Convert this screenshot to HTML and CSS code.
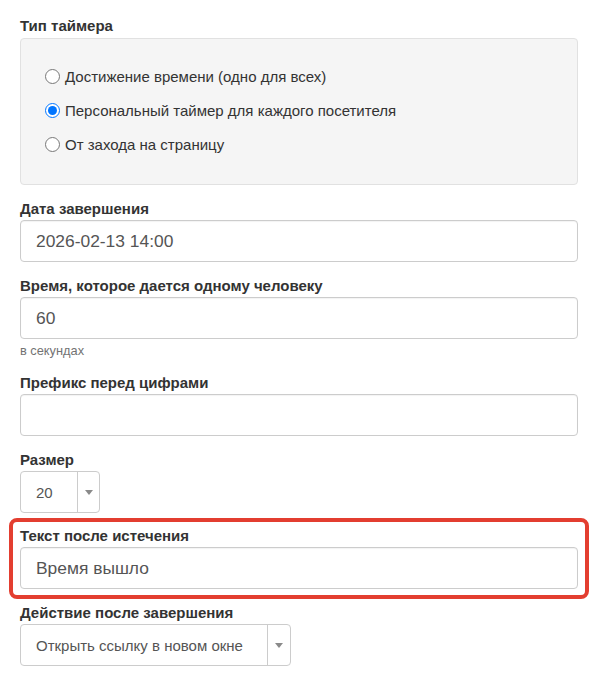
FILE: index.html
```html
<!DOCTYPE html>
<html lang="ru">
<head>
<meta charset="utf-8">
<title>Настройки таймера</title>
<link rel="stylesheet" href="styles.css">
</head>
<body>
<form class="form">
  <div class="group group--timer">
    <div class="label label--top">Тип таймера</div>
    <div class="panel">
      <label class="radio"><input type="radio" name="type"> <span>Достижение времени (одно для всех)</span></label>
      <label class="radio"><input type="radio" name="type" checked> <span>Персональный таймер для каждого посетителя</span></label>
      <label class="radio"><input type="radio" name="type"> <span>От захода на страницу</span></label>
    </div>
  </div>

  <div class="group">
    <label class="label">Дата завершения</label>
    <div class="input input--lg">2026-02-13 14:00</div>
  </div>

  <div class="group">
    <label class="label">Время, которое дается одному человеку</label>
    <div class="input input--lg">60</div>
    <div class="help">в секундах</div>
  </div>

  <div class="group">
    <label class="label">Префикс перед цифрами</label>
    <div class="input input--lg"></div>
  </div>

  <div class="group group--tight">
    <label class="label">Размер</label>
    <div class="select select--size">
      <span class="select__value">20</span>
      <span class="select__caret"><span class="triangle"></span></span>
    </div>
  </div>

  <div class="highlight">
    <label class="label">Текст после истечения</label>
    <div class="input input--lg">Время вышло</div>
  </div>

  <div class="group">
    <label class="label">Действие после завершения</label>
    <div class="select select--action">
      <span class="select__value">Открыть ссылку в новом окне</span>
      <span class="select__caret"><span class="triangle"></span></span>
    </div>
  </div>
</form>
</body>
</html>
```
FILE: styles.css
```css
* { box-sizing: border-box; }

html, body {
  margin: 0;
  padding: 0;
  background: #ffffff;
}

body {
  font-family: "Liberation Sans", Arial, sans-serif;
  color: #333333;
  font-size: 14px;
}

.form {
  width: 558px;
  margin: 0 0 0 20px;
  padding-top: 16px;
}

.group {
  margin-bottom: 14px;
}

.group--tight {
  margin-bottom: 5px;
}

.label {
  display: block;
  font-weight: bold;
  font-size: 15px;
  line-height: 20px;
  height: 20px;
  margin-bottom: 1px;
  color: #333333;
}

.label--top {
  margin-bottom: 2px;
}

.panel {
  background: #f5f5f5;
  border: 1px solid #e1e1e1;
  border-radius: 4px;
  padding: 20px 20px 23px 24px;
}

.radio {
  display: flex;
  align-items: center;
  height: 34px;
  font-size: 15px;
  color: #333333;
}

.radio input {
  width: 15px;
  height: 15px;
  margin: 0 5px 0 0;
  flex: none;
}

.input {
  height: 42px;
  border: 1px solid #cccccc;
  border-radius: 4px;
  background: #ffffff;
  box-shadow: inset 0 1px 1px rgba(0,0,0,0.05);
  padding: 0 15px;
  display: flex;
  align-items: center;
  color: #555555;
}

.input--lg {
  font-size: 17.4px;
}

.help {
  font-size: 12.8px;
  line-height: 17px;
  color: #737373;
  margin: 3px 0 1px;
}

.select {
  height: 42px;
  border: 1px solid #cccccc;
  border-radius: 4px;
  background: #ffffff;
  display: flex;
  align-items: stretch;
  color: #555555;
  font-size: 15px;
}

.select--size { width: 80px; }
.select--action { width: 271px; }

.select__value {
  flex: 1;
  display: flex;
  align-items: center;
  padding-left: 15px;
  white-space: nowrap;
}

.select__caret {
  width: 22px;
  border-left: 1px solid #cccccc;
  display: flex;
  align-items: center;
  justify-content: center;
}

.select--action .select__caret { width: 23px; }

.triangle {
  width: 0;
  height: 0;
  border-left: 4px solid transparent;
  border-right: 4px solid transparent;
  border-top: 5px solid #8a8a8a;
  margin-top: 1px;
}

.highlight {
  margin: 0 -11px 4px;
  border: 4px solid #e33e30;
  border-radius: 8px;
  padding: 4px 7px 6px;
}
```
